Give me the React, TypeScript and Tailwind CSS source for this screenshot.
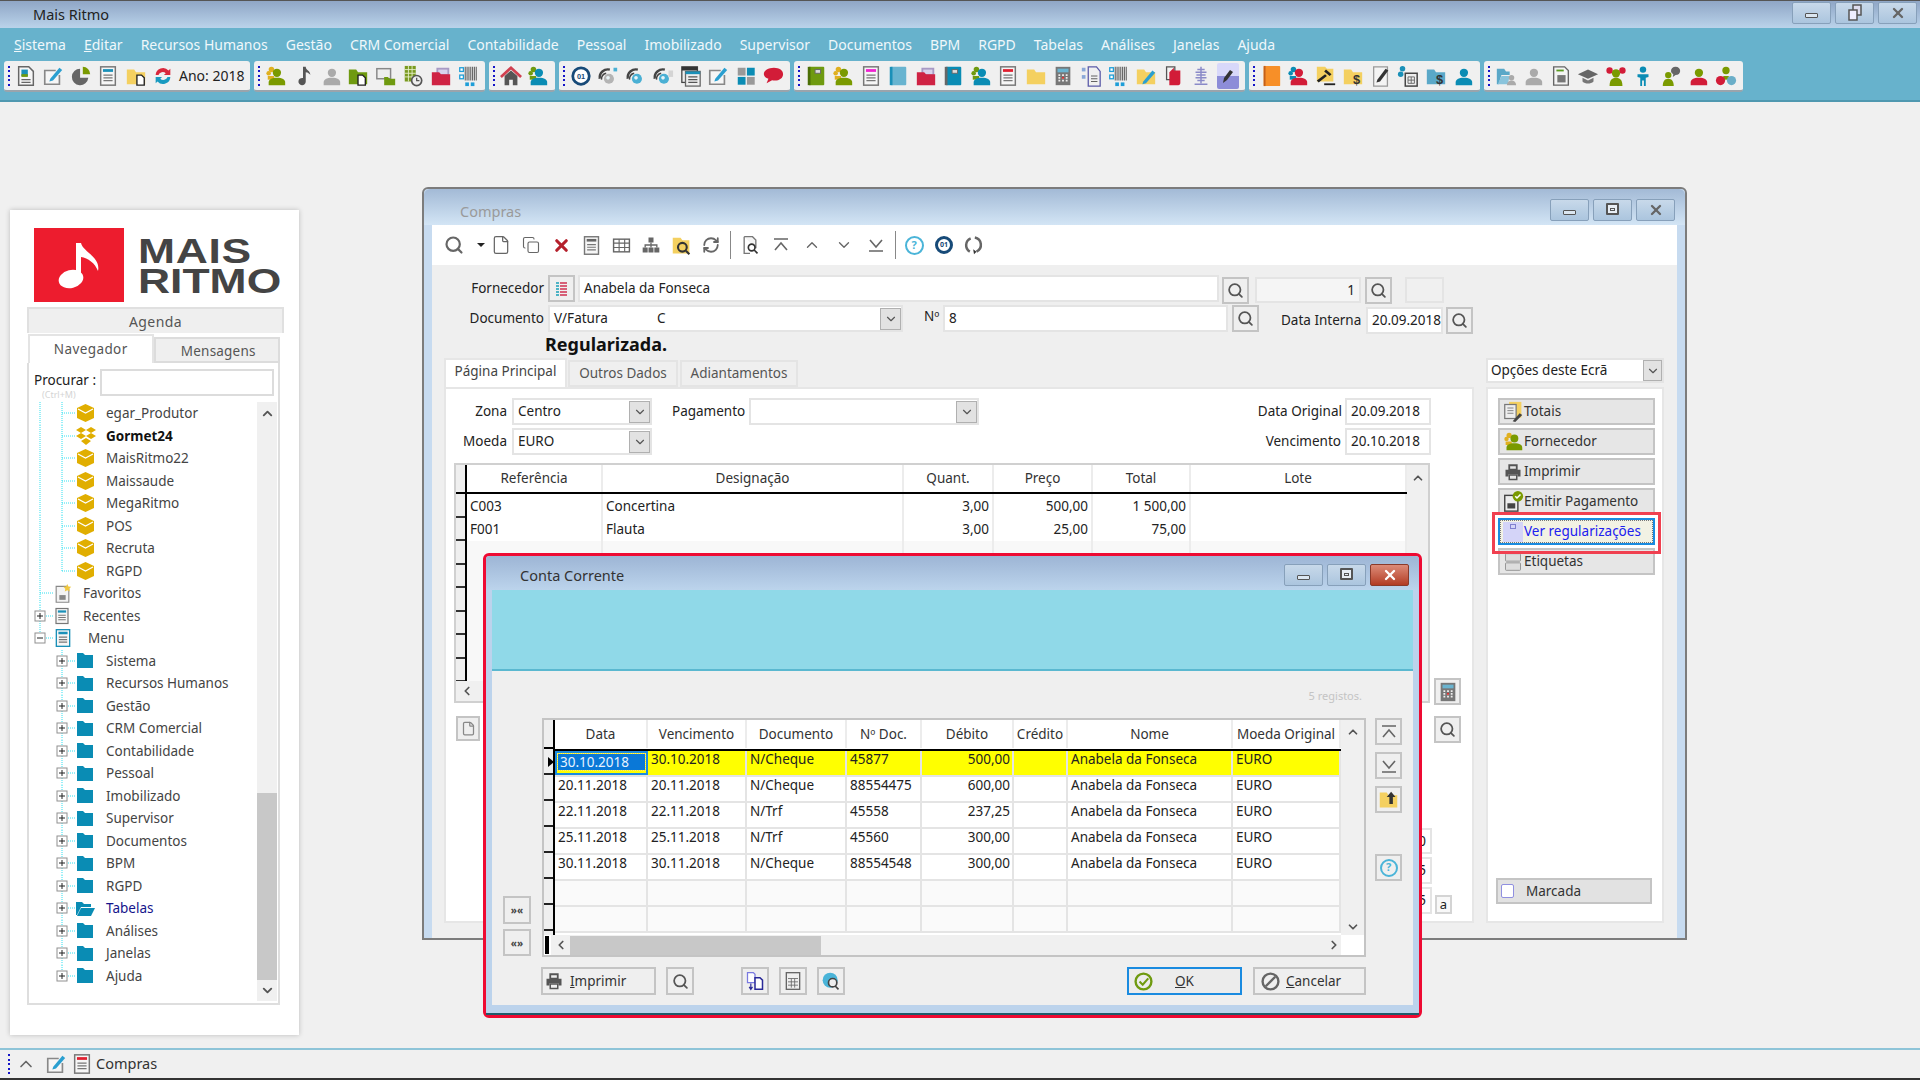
import { ReactNode } from "react";
import { ChevronDown, ChevronUp, ChevronLeft, ChevronRight, Search, File, Copy, X, RefreshCw } from "lucide-react";

type Kids = { children: ReactNode };

const Svg = ({ children, s = 22 }: Kids & { s?: number }) => (
  <svg width={s} height={s} viewBox="0 0 24 24" className="shrink-0">
    {children}
  </svg>
);

// toolbar glyphs
const Person = ({ body = "#7a9a00", head = "#7a9a00", back, s }: { body?: string; head?: string; back?: string; s?: number }) => (
  <Svg s={s}>
    {back && <circle cx="7" cy="5" r="3" fill={back} />}
    {back && <circle cx="4" cy="9" r="2.500" fill={back} />}
    {back && <path d="M3 12h7v4H3z" fill={back} />}
    <circle cx="13" cy="8.500" r="4.500" fill={head} />
    <path d="M4 22v-3c0-3 3-5 9-5s9 2 9 5v3z" fill={body} />
  </Svg>
);
const Doc = ({ band = "#888", stroke = "#777", s }: { band?: string; stroke?: string; s?: number }) => (
  <Svg s={s}>
    <rect x="4" y="2" width="16" height="20" fill="#f6f6f6" stroke={stroke} strokeWidth="1.6" />
    <rect x="6.500" y="4.500" width="11" height="3" fill={band} />
    <path d="M7 11h10M7 14h10M7 17h10" stroke="#777" strokeWidth="1.4" />
  </Svg>
);
const Folder = ({ fill = "#f4d060", mark, s }: { fill?: string; mark?: ReactNode; s?: number }) => (
  <Svg s={s}>
    <path d="M2 5h8l2 3h10v13H2z" fill={fill} />
    {mark}
  </Svg>
);
const Book = ({ fill = "#6f9a10", spine = "#4c6f06", label = true }: { fill?: string; spine?: string; label?: boolean }) => (
  <Svg>
    <rect x="4" y="2" width="17" height="20" rx="1" fill={fill} />
    <rect x="3" y="2" width="3" height="20" fill={spine} />
    {label && <rect x="11" y="5" width="6" height="4" fill="#ddd" stroke="#666" />}
  </Svg>
);
const RedFolder = () => (
  <Svg>
    <path d="M7 3h14v15H7z" fill="#a89ac4" />
    <path d="M9 5h10v5H9z" fill="#d8d2ec" />
    <path d="M2 8h8l2 2h10v12H2z" fill="#cf2344" />
  </Svg>
);
const Barcode = () => (
  <Svg>
    <path d="M9 2v15M11 2v15M13 2v15M15 2v15M17 2v15M19 2v15M21 2v15" stroke="#666" strokeWidth="1.2" />
    <rect x="3" y="3" width="4" height="4" fill="#fff" stroke="#1e9ed8" strokeWidth="1.4" />
    <rect x="3" y="11" width="4" height="4" fill="#fff" stroke="#1e9ed8" strokeWidth="1.4" />
    <rect x="9" y="19" width="4" height="4" fill="#1e9ed8" />
    <rect x="15" y="19" width="4" height="4" fill="#1e9ed8" />
  </Svg>
);
const Ring = ({ c = "#444", ball = "#4ab0d4", extra }: { c?: string; ball?: string; extra?: ReactNode }) => (
  <Svg>
    <path d="M3 15a9 9 0 0 1 11-10" fill="none" stroke={c} strokeWidth="2.600" />
    <path d="M5 16a6 6 0 0 1 5-7" fill="none" stroke={c} strokeWidth="1.600" />
    <circle cx="13" cy="15" r="5.500" fill={ball} />
    <circle cx="12" cy="14" r="2" fill="#e8f4f8" />
    {extra}
  </Svg>
);
const Pencil = ({ c = "#2a9fd0" }: { c?: string }) => (
  <Svg>
    <path d="M19 11v10H3V6h12" fill="#f6f6f6" stroke="#888" strokeWidth="1.800" />
    <path d="M9 15l10-12 3 2.500L12 17l-4 1z" fill={c} />
  </Svg>
);
const Calc = () => (
  <Svg>
    <rect x="4" y="2" width="16" height="20" fill="#777" />
    <rect x="6" y="4" width="12" height="4" fill="#6ab4d0" />
    <path d="M7 11h2M11 11h2M15 11h2M7 14h2M11 14h2M15 14h2M7 17h2M11 17h2M15 17h2" stroke="#eee" strokeWidth="1.800" />
    <rect x="11" y="13" width="2" height="2" fill="#d22" />
  </Svg>
);
const Dollar = ({ fill }: { fill: string }) => (
  <Folder
    fill={fill}
    mark={
      <text x="16" y="21" fontSize="14" fontWeight="700" fill="#333" textAnchor="middle" fontFamily="Liberation Sans">
        $
      </text>
    }
  />
);

const toolbars: { width: string; items: ReactNode[]; tail?: string }[] = [
  {
    width: "w-[246px]",
    tail: "Ano: 2018",
    items: [
      <Svg>
        <path d="M4 2h11l5 5v15H4z" fill="#f6f6f6" stroke="#666" strokeWidth="1.600" />
        <rect x="7" y="5" width="7" height="7" fill="#1a90b8" />
        <rect x="7" y="10" width="7" height="3" fill="#6f9a10" />
        <path d="M7 16h10M7 19h10" stroke="#666" strokeWidth="1.400" />
      </Svg>,
      <Pencil />,
      <Svg>
        <path d="M11 4a9 9 0 1 0 9 10h-9z" fill="#666" />
        <path d="M14 2a8 8 0 0 1 8 8h-8z" fill="#7a9a00" />
      </Svg>,
      <Doc band="#1a90b8" />,
      <Folder mark={<path d="M13 11h5l3 3v8h-8z" fill="#fff" stroke="#222" strokeWidth="1.500" />} />,
      <Svg>
        <path d="M4 11a8 8 0 0 1 14-5l2-2v7h-7l2-2a5 5 0 0 0-8 2z" fill="#d9283c" />
        <path d="M20 13a8 8 0 0 1-14 5l-2 2v-7h7l-2 2a5 5 0 0 0 8-2z" fill="#189ac0" />
      </Svg>,
    ],
  },
  {
    width: "w-[231px]",
    items: [
      <Person back="#e0b020" />,
      <Svg>
        <path d="M12 2h3c0 4 5 4 5 9-2-3-5-3-5-3v10a4 4 0 1 1-3-3.800z" fill="#555" />
      </Svg>,
      <Person body="#aaa" head="#aaa" />,
      <Folder fill="#6f9a10" mark={<path d="M12 11h5l3 3v8h-8z" fill="#fff" stroke="#222" strokeWidth="1.500" />} />,
      <Svg>
        <rect x="2" y="4" width="15" height="11" fill="#eee" stroke="#888" strokeWidth="1.600" />
        <path d="M10 13h4l2 2h6v7H10z" fill="#6f9a10" />
      </Svg>,
      <Svg>
        <rect x="3" y="1" width="12" height="17" fill="#7a9a20" />
        <path d="M3 5h12M3 9h12M3 13h12M7 1v17M11 1v17" stroke="#e6efc8" />
        <circle cx="16" cy="17" r="5.500" fill="#eee" stroke="#555" strokeWidth="1.800" />
        <path d="M16 14v3h3" fill="none" stroke="#555" strokeWidth="1.400" />
      </Svg>,
      <RedFolder />,
      <Barcode />,
    ],
  },
  {
    width: "w-[66px]",
    items: [
      <Svg>
        <path d="M1 13 12 3l11 10" fill="none" stroke="#d04050" strokeWidth="3" />
        <path d="M5 12l7-6 7 6v10h-5v-6h-4v6H5z" fill="#555" />
      </Svg>,
      <Person body="#0a8cb4" head="#0a8cb4" back="#6f9a10" />,
    ],
  },
  {
    width: "w-[231px]",
    items: [
      <Svg>
        <circle cx="12" cy="12" r="9" fill="#fff" stroke="#174a78" strokeWidth="3" />
        <text x="12" y="15" fontSize="8" fontWeight="700" fill="#174a78" textAnchor="middle" fontFamily="Liberation Sans">
          01
        </text>
      </Svg>,
      <Ring ball="#b4b4b4" extra={<rect x="18" y="3" width="4" height="4" fill="#4ab0d4" />} />,
      <Ring />,
      <Ring extra={<rect x="18" y="6" width="5" height="7" fill="#d4d4d4" />} />,
      <Svg>
        <rect x="2" y="2" width="17" height="17" fill="#eee" stroke="#444" strokeWidth="1.400" />
        <rect x="2" y="2" width="17" height="4" fill="#333" />
        <rect x="6" y="7" width="16" height="16" fill="#eee" stroke="#666" strokeWidth="1.400" />
        <rect x="6" y="7" width="16" height="3" fill="#1a90b8" />
        <path d="M9 13h10M9 16h10M9 19h10" stroke="#555" strokeWidth="1.400" />
      </Svg>,
      <Pencil />,
      <Svg>
        <rect x="3" y="3" width="8.500" height="8.500" fill="#999" />
        <rect x="13" y="3" width="8.500" height="8.500" fill="#0a8cb4" />
        <rect x="3" y="13" width="8.500" height="8.500" fill="#0a8cb4" />
        <rect x="13" y="13" width="8.500" height="8.500" fill="#999" />
      </Svg>,
      <Svg>
        <path d="M13 3c6 0 10 3 10 7s-4 7-9 7c-1 0-2 0-3-.500L5 20l2-5c-3-1-5-3-5-5 0-4 5-7 11-7z" fill="#d21c38" />
      </Svg>,
    ],
  },
  {
    width: "w-[451px]",
    items: [
      <Book />,
      <Person back="#e0b020" />,
      <Doc band="#f020d0" />,
      <Book fill="#68b4d0" spine="#1a90b8" label={false} />,
      <RedFolder />,
      <Book fill="#0a8cb4" spine="#666" />,
      <Person body="#0a8cb4" head="#0a8cb4" back="#6f9a10" />,
      <Doc band="#e02030" />,
      <Folder />,
      <Calc />,
      <Svg>
        <rect x="2" y="3" width="4" height="4" fill="#8aa8d8" />
        <rect x="2" y="11" width="4" height="4" fill="#8aa8d8" />
        <path d="M9 2h9l4 5v16H9z" fill="#f0f0f0" stroke="#5a5aa8" strokeWidth="1.400" />
        <path d="M12 12h7M12 15h7M12 18h7" stroke="#555" />
      </Svg>,
      <Barcode />,
      <Folder mark={<path d="M9 18l10-12 3 2.500L12 20l-4 1z" fill="#2a9fd0" />} />,
      <Svg>
        <path d="M5 2h9v14H5z" fill="#f4f4f4" stroke="#555" strokeWidth="1.400" />
        <path d="M13 6h7v14a2 2 0 0 1-2 2H8V8l5-5z" fill="#d21c38" />
      </Svg>,
      <Svg>
        <path d="M12 2v18M8 5h8M6 8h12M7 11h10M6 14h12M8 17h8M5 21h14" stroke="#8a8ac8" strokeWidth="1.600" />
      </Svg>,
      <span className="flex h-[26px] w-[22px] items-center justify-center rounded-[2px] bg-linear-to-b from-[#d8d8fa] from-50% to-[#8d8dd8] to-50%">
        <svg width="14" height="18" viewBox="0 0 14 18">
          <path d="M2 16l1-5 6-8 3 2-6 8z" fill="#333" />
        </svg>
      </span>,
    ],
  },
  {
    width: "w-[231px]",
    items: [
      <Svg>
        <rect x="4" y="1" width="18" height="22" rx="1" fill="#f78f28" />
        <rect x="4" y="1" width="2" height="22" fill="#c4601a" />
      </Svg>,
      <Person body="#d21c38" head="#d21c38" back="#0a8cb4" />,
      <Svg>
        <path d="M2 2h9l2 2h7v14H2z" fill="#f4d060" />
        <path d="M12 5l6 5-2 2-6-5zM11 10l2 2-9 7-2-2z" fill="#222" />
        <path d="M10 20h12v2H10z" fill="#222" />
      </Svg>,
      <Dollar fill="#f4d060" />,
      <Svg>
        <path d="M4 2h15v21H4z" fill="#f4f4f4" stroke="#999" strokeWidth="1.400" />
        <path d="M8 16l9-12 3 2-9 12-4 1z" fill="#333" />
      </Svg>,
      <Svg>
        <circle cx="6" cy="4" r="3" fill="#1a90b8" />
        <circle cx="4" cy="10" r="3" fill="#1a90b8" />
        <rect x="9" y="9" width="13" height="14" fill="#eee" stroke="#444" strokeWidth="1.600" />
        <path d="M12 13h7v7h-7zM15.500 13v7M12 16.500h7" stroke="#666" fill="none" />
      </Svg>,
      <Dollar fill="#5aa8c8" />,
      <Person body="#0a8cb4" head="#0a8cb4" />,
    ],
  },
  {
    width: "w-[259px]",
    items: [
      <Svg>
        <path d="M2 4h8l2 3h4v4H7L4 21H2z" fill="#5aa8c8" />
        <path d="M7 12h9l-2 9H3z" fill="#8ac4dc" />
        <circle cx="18" cy="14" r="3" fill="#aaa" />
        <path d="M13 22c0-3 2-5 5-5s5 2 5 5z" fill="#aaa" />
      </Svg>,
      <Person body="#aaa" head="#aaa" />,
      <Svg>
        <path d="M4 2h12l4 4v16H4z" fill="#f4f4f4" stroke="#666" strokeWidth="1.500" />
        <rect x="8" y="11" width="9" height="8" fill="#777" />
        <path d="M7 6h8" stroke="#5a9a20" strokeWidth="2" />
      </Svg>,
      <Svg>
        <path d="M12 5 23 10l-11 5L1 10z" fill="#666" />
        <path d="M6 14v4c3 3 9 3 12 0v-4l-6 3z" fill="#777" />
      </Svg>,
      <Svg>
        <circle cx="5" cy="6" r="3.500" fill="#d21c38" />
        <circle cx="19" cy="6" r="3.500" fill="#d21c38" />
        <circle cx="12" cy="9" r="4.500" fill="#7a9a00" />
        <path d="M5 23c0-7 3-9 7-9s7 2 7 9z" fill="#7a9a00" />
      </Svg>,
      <Svg>
        <circle cx="12" cy="5" r="3.500" fill="#0a8cb4" />
        <path d="M6 10h12v3l-3 1v9h-2v-6h-2v6H9v-9l-3-1z" fill="#0a8cb4" />
      </Svg>,
      <Svg>
        <circle cx="9" cy="11" r="3.500" fill="#7a9a00" />
        <path d="M3 23c0-5 2-8 6-8s6 3 6 8z" fill="#7a9a00" />
        <path d="M17 2c3 0 5 2 5 4.500S20 11 17 11l-3 2 .5-3c-1.500-1-2.500-2-2.500-3.500C12 4 14 2 17 2z" fill="#666" />
      </Svg>,
      <Person body="#d21c38" head="#7a9a00" />,
      <Svg>
        <circle cx="12" cy="6" r="4" fill="#7a9a00" />
        <path d="M9 12h6v4H9z" fill="#7a9a00" />
        <circle cx="6" cy="17" r="5" fill="#d21c38" />
        <circle cx="18" cy="17" r="5" fill="#6aaec8" />
      </Svg>,
    ],
  },
];

const menu = [
  { t: "Sistema", u: true },
  { t: "Editar", u: true },
  { t: "Recursos Humanos" },
  { t: "Gestão" },
  { t: "CRM Comercial" },
  { t: "Contabilidade" },
  { t: "Pessoal" },
  { t: "Imobilizado" },
  { t: "Supervisor" },
  { t: "Documentos" },
  { t: "BPM" },
  { t: "RGPD" },
  { t: "Tabelas" },
  { t: "Análises" },
  { t: "Janelas", u: true },
  { t: "Ajuda" },
];

const Grip = () => (
  <span className="flex h-[20px] w-[2px] flex-col justify-between">
    <i className="h-[2px] bg-[#1414c8]" />
    <i className="h-[2px] bg-[#1414c8]" />
    <i className="h-[2px] bg-[#1414c8]" />
    <i className="h-[2px] bg-[#1414c8]" />
    <i className="h-[2px] bg-[#1414c8]" />
  </span>
);

type Kind = "min" | "max" | "restore" | "close";

const WinGlyph = ({ kind, dark }: { kind: Kind; dark?: boolean }) => {
  if (kind === "min") return <i className="mt-[5px] h-[5px] w-[13px] rounded-[1px] border border-[#555] bg-[#dbe6f0]" />;
  if (kind === "max")
    return (
      <i className="mb-[2px] flex h-[12px] w-[13px] items-center justify-center rounded-[1px] border-2 border-[#555] bg-[#e8eef5]">
        <b className="h-[3px] w-[5px] border border-[#555]" />
      </i>
    );
  if (kind === "restore")
    return (
      <svg width="16" height="18" viewBox="0 0 16 18">
        <rect x="6" y="1" width="8" height="10" fill="#dde" stroke="#555" strokeWidth="1.500" />
        <rect x="2" y="6" width="8" height="10" fill="#eef" stroke="#555" strokeWidth="1.500" />
      </svg>
    );
  return <X size={16} strokeWidth={3.5} className={dark ? "text-white" : "text-[#666]"} />;
};

const WinBtn = ({ kind, red }: { kind: Kind; red?: boolean }) => (
  <span
    className={
      red
        ? "flex h-[22px] w-[39px] items-center justify-center rounded-[2px] border border-[#8a3a2a] bg-linear-to-b from-[#dc8b78] to-[#b23a22]"
        : "flex h-[22px] w-[39px] items-center justify-center rounded-[2px] border border-[#87a0ba] bg-linear-to-b from-[#c8d9ea] to-[#abc5de]"
    }
  >
    <WinGlyph kind={kind} dark={red} />
  </span>
);

const Field = ({ w, children, right }: { w: string; children?: ReactNode; right?: boolean }) => (
  <div className={`flex h-[27px] items-center border-2 border-[#e4e4e4] bg-white px-[4px] text-[13.5px] text-[#222] ${w} ${right ? "justify-end" : ""}`}>
    {children}
  </div>
);

const Combo = ({ w, children }: { w: string; children?: ReactNode }) => (
  <div className={`flex h-[27px] items-center justify-between border-2 border-[#e4e4e4] bg-white pl-[4px] text-[13.5px] text-[#222] ${w}`}>
    <span className="flex">{children}</span>
    <span className="flex h-[22px] w-[21px] items-center justify-center border border-[#b0b0b0] bg-[#e2e2e2]">
      <ChevronDown size={14} className="text-[#555]" />
    </span>
  </div>
);

const BoxBtn = ({ w = "w-[27px]", h = "h-[27px]", children, className = "" }: { w?: string; h?: string; children?: ReactNode; className?: string }) => (
  <span className={`flex shrink-0 items-center justify-center border-2 border-[#c4c4c4] bg-[#efefef] ${w} ${h} ${className}`}>{children}</span>
);

const SearchBtn = () => (
  <BoxBtn>
    <Search size={17} strokeWidth={2.5} className="text-[#555]" />
  </BoxBtn>
);

// tree
const Cube = () => (
  <svg width="17" height="18" viewBox="0 0 17 18" className="shrink-0">
    <path d="M8.500 0 17 4v10l-8.500 4L0 14V4z" fill="#e0ae00" />
    <path d="M1 5l7.500 4L16 5" fill="none" stroke="#fff" strokeWidth="1.200" />
  </svg>
);
const BoxOpen = () => (
  <svg width="20" height="18" viewBox="0 0 20 18" className="shrink-0">
    <path d="M5 0l5 3-5 3-5-3zM15 0l5 3-5 3-5-3zM5 6l5 3-5 3-5-3zM15 6l5 3-5 3-5-3zM10 11l5 3-5 4-5-4z" fill="#e0ae00" />
  </svg>
);
const TreeFolder = ({ open }: { open?: boolean }) => (
  <svg width="19" height="15" viewBox="0 0 19 15" className="shrink-0">
    {open ? <path d="M0 1h6l2 2h7v3H5L1 14H0zM5 7h14l-4 8H1z" fill="#0a8cb4" /> : <path d="M1 0h6l2 2h8v13H1z" fill="#0a8cb4" />}
  </svg>
);
const Favorite = () => (
  <Svg s={19}>
    <path d="M4 3h13l3 3v17H4z" fill="#f4f4f4" stroke="#888" strokeWidth="1.400" />
    <rect x="8" y="14" width="8" height="6" fill="#888" />
    <path d="M18 0l1.500 3 3.500.500-2.500 2.500.6 3.500-3.100-1.700-3.100 1.700.6-3.500L13 3.500l3.500-.500z" fill="#f0c840" />
  </Svg>
);

const Guide = ({ level, first, stop, sign }: { level: 1 | 2; first?: boolean; stop?: boolean; sign?: "+" | "-" }) => {
  const x = level === 2 ? 33 : 11;
  const width = level === 2 ? 46 : 24;
  return (
    <svg width={width} height="22.500" viewBox={`0 0 ${width} 22.5`} className="shrink-0">
      {level === 2 && first && <path d="M11 0v22.500" stroke="#30e0f0" strokeDasharray="1 1" />}
      <path d={`M${x} 0V${stop ? 11 : 22.5}M${x} 11H${width}`} stroke="#30e0f0" strokeDasharray="1 1" fill="none" />
      {sign && (
        <g>
          <rect x={x - 5} y="6" width="10" height="10" fill="#fff" stroke="#909090" strokeWidth="1" />
          <path d={sign === "+" ? `M${x - 3} 11h6M${x} 8v6` : `M${x - 3} 11h6`} stroke="#222" />
        </g>
      )}
    </svg>
  );
};

const projects = ["egar_Produtor", "Gormet24", "MaisRitmo22", "Maissaude", "MegaRitmo", "POS", "Recruta", "RGPD"];
const modules = ["Sistema", "Recursos Humanos", "Gestão", "CRM Comercial", "Contabilidade", "Pessoal", "Imobilizado", "Supervisor", "Documentos", "BPM", "RGPD", "Tabelas", "Análises", "Janelas", "Ajuda"];

const TreeRow = ({ children }: Kids) => <div className="flex h-[22.5px] items-center text-[13.5px] text-[#444]">{children}</div>;

const Sidebar = () => (
  <div className="absolute top-[210px] left-[10px] flex h-[825px] w-[289px] flex-col bg-white pt-[18px] pl-[17px] shadow-[0_0_5px_rgba(0,0,0,0.22)]">
    <div className="ml-[7px] flex h-[79px] items-start gap-[14px]">
      <svg width="90" height="74" viewBox="0 0 90 74" className="bg-[#ed1c2e]">
        <ellipse cx="37" cy="51" rx="12.500" ry="9" fill="#fff" transform="rotate(-14 37 51)" />
        <path d="M42 15h5c2 9 20 14 17 28-3-8-10-13-17-14v22h-5z" fill="#fff" />
      </svg>
      <div className="mt-[8px] flex origin-left scale-x-[1.27] flex-col text-[35px] leading-[30px] font-bold text-[#444] font-['Liberation_Sans',sans-serif]">
        <span className="tracking-[0.5px]">MAIS</span>
        <span>RITMO</span>
      </div>
    </div>
    <div className="flex h-[26px] w-[257px] items-center justify-center border-2 border-b-0 border-[#e0e0e0] bg-[#efefef] text-[14px] tracking-[0.4px] text-[#555]">Agenda</div>
    <div className="flex h-[30px] w-[253px] items-end pl-px">
      <div className="flex h-[29px] w-[126px] items-center justify-center border-x-2 border-t-2 border-[#e4e4e4] bg-white text-[13.5px] tracking-[0.4px] text-[#555]">Navegador</div>
      <div className="flex h-[26px] w-[127px] items-center justify-center border-2 border-[#dcdcdc] bg-[#efefef] pt-[2px] pl-[3px] text-[13.5px] tracking-[0.2px] text-[#555]">Mensagens</div>
    </div>
    <div className="flex h-[642px] w-[253px] flex-col border-2 border-t-0 border-[#dedede] pt-[6px]">
      <div className="flex h-[33px]">
        <div className="flex w-[71px] flex-col pt-[2px] pl-[5px] text-[13.5px] leading-[18px] text-[#222]">
          <span>Procurar :</span>
          <span className="pl-[8px] text-[9px] leading-[12px] text-[#d4d4d4]">(Ctrl+M)</span>
        </div>
        <div className="h-[27px] w-[174px] border-2 border-[#dcdcdc]" />
      </div>
      <div className="flex flex-1">
        <div className="flex-1">
          {projects.map((p, i) => (
            <TreeRow key={p}>
              <Guide level={2} first stop={i === projects.length - 1} />
              <span className="flex w-[21px] justify-center">{i === 1 ? <BoxOpen /> : <Cube />}</span>
              <span className={i === 1 ? "ml-[10px] font-bold text-[#111]" : "ml-[10px]"}>{p}</span>
            </TreeRow>
          ))}
          <TreeRow>
            <Guide level={1} />
            <Favorite />
            <span className="ml-[11px]">Favoritos</span>
          </TreeRow>
          <TreeRow>
            <Guide level={1} sign="+" />
            <Doc band="#1a90b8" s={18} />
            <span className="ml-[12px]">Recentes</span>
          </TreeRow>
          <TreeRow>
            <Guide level={1} stop sign="-" />
            <Doc band="#1a90b8" stroke="#1a90b8" s={20} />
            <span className="ml-[15px]">Menu</span>
          </TreeRow>
          {modules.map((m, i) => (
            <TreeRow key={m + i}>
              <Guide level={2} sign="+" stop={i === modules.length - 1} />
              <span className="flex w-[21px] justify-center">
                <TreeFolder open={m === "Tabelas"} />
              </span>
              <span className={m === "Tabelas" ? "ml-[10px] text-[#14148c]" : "ml-[10px]"}>{m}</span>
            </TreeRow>
          ))}
        </div>
        <div className="mr-px flex h-[599px] w-[20px] flex-col items-center bg-[#f0f0f0]">
          <ChevronUp size={15} strokeWidth={3} className="mt-[4px] text-[#555]" />
          <span className="mt-[372px] h-[187px] w-full bg-[#c8c8c8]" />
          <ChevronDown size={15} strokeWidth={3} className="mt-[3px] text-[#555]" />
        </div>
      </div>
    </div>
  </div>
);

function ArrowBar({ up }: { up?: boolean }) {
  return (
    <svg width="18" height="16" viewBox="0 0 18 16">
      {up ? <path d="M2 2h14M3 13l6-7 6 7" fill="none" stroke="#666" strokeWidth="1.600" /> : <path d="M2 14h14M3 3l6 7 6-7" fill="none" stroke="#666" strokeWidth="1.600" />}
    </svg>
  );
}

const formTools: ReactNode[] = [
  <Search size={20} strokeWidth={2.6} className="text-[#666]" />,
  <span className="h-0 w-0 border-x-[4px] border-t-[4px] border-x-transparent border-t-[#222]" />,
  <File size={20} strokeWidth={1.5} className="text-[#666]" />,
  <Copy size={18} strokeWidth={1.5} className="text-[#666]" />,
  <X size={19} strokeWidth={4} className="text-[#b5202c]" />,
  <Doc band="#666" s={21} />,
  <Svg s={19}>
    <rect x="2" y="4" width="20" height="16" fill="none" stroke="#666" strokeWidth="1.800" />
    <path d="M2 9h20M2 14.500h20M9 4v16M16 4v16" stroke="#666" strokeWidth="1.400" />
  </Svg>,
  <Svg s={20}>
    <rect x="9" y="3" width="6" height="6" fill="#666" />
    <rect x="2" y="15" width="6" height="6" fill="#666" />
    <rect x="9" y="15" width="6" height="6" fill="#666" />
    <rect x="16" y="15" width="6" height="6" fill="#666" />
    <path d="M12 9v6M5 15v-3h14v3" stroke="#666" strokeWidth="1.600" fill="none" />
  </Svg>,
  <Svg s={21}>
    <path d="M2 3h9l2 3h8v15H2z" fill="#f4d060" />
    <circle cx="13" cy="14" r="5" fill="none" stroke="#333" strokeWidth="2.400" />
    <path d="M17 18l4 4" stroke="#333" strokeWidth="2.400" />
  </Svg>,
  <RefreshCw size={18} strokeWidth={2.4} className="text-[#666]" />,
];

const formToolsB: ReactNode[] = [
  <Svg s={20}>
    <path d="M5 2h10l4 4v10" fill="#f4f4f4" stroke="#777" strokeWidth="1.600" />
    <path d="M5 2v20h7" fill="none" stroke="#777" strokeWidth="1.600" />
    <circle cx="14" cy="15" r="4" fill="none" stroke="#333" strokeWidth="2" />
    <path d="M17 18l4 4" stroke="#333" strokeWidth="2" />
  </Svg>,
  <ArrowBar up />,
  <ChevronUp size={18} strokeWidth={1.8} className="text-[#666]" />,
  <ChevronDown size={18} strokeWidth={1.8} className="text-[#666]" />,
  <ArrowBar />,
];

const FormToolbar = () => (
  <div className="flex h-[40px] shrink-0 items-center bg-white">
    <span className="flex">
      <span className="flex w-[44px] items-center justify-center">{formTools[0]}</span>
      <span className="flex w-[10px] items-center justify-center">{formTools[1]}</span>
      {formTools.slice(2).map((t, i) => (
        <span key={i} className="flex w-[30px] items-center justify-center">
          {t}
        </span>
      ))}
    </span>
    <i className="mr-[3px] ml-[4px] h-[28px] w-px bg-[#888]" />
    <span className="flex">
      {formToolsB.map((t, i) => (
        <span key={i} className={i === 1 ? "flex w-[30px] items-center justify-center" : "flex w-[32px] items-center justify-center"}>
          {t}
        </span>
      ))}
    </span>
    <i className="mr-[3px] ml-[3px] h-[28px] w-px bg-[#888]" />
    <span className="flex w-[30px] items-center justify-center">
      <span className="flex h-[19px] w-[19px] items-center justify-center rounded-full border-2 border-[#4ab4d8] text-[11px] font-bold text-[#4ab4d8]">?</span>
    </span>
    <span className="flex w-[30px] items-center justify-center">
      <span className="flex h-[18px] w-[18px] items-center justify-center rounded-full border-[3px] border-[#174a78] text-[7px] font-bold text-[#174a78]">01</span>
    </span>
    <span className="flex w-[30px] items-center justify-center">
      <Svg s={20}>
        <path d="M8 4a9 9 0 0 0-1 16M13 3a9 9 0 0 1 2 17" fill="none" stroke="#666" strokeWidth="3" />
        <path d="M11 17l4 3-3 3z" fill="#333" />
      </Svg>
    </span>
  </div>
);

const mainCols = "grid-cols-[136px_301px_90px_99px_98px_216px]";
const mainRows = [
  ["C003", "Concertina", "3,00", "500,00", "1 500,00", ""],
  ["F001", "Flauta", "3,00", "25,00", "75,00", ""],
];
const mainEmpty = [0, 1, 2, 3, 4, 5, 6];

const MainTable = () => (
  <div className="flex h-[240px] w-[976px] flex-col border-2 border-[#d0d0d0] bg-white text-[13.5px] text-[#222]">
    <div className="flex flex-1 overflow-hidden">
      <div className="w-[11px] shrink-0 border-r-2 border-black bg-[#efefef]">
        <div className="h-[29px] border-b-2 border-black" />
        {[0, 1, ...mainEmpty].map((r) => (
          <div key={r} className="h-[23.500px] border-b-2 border-[#333]" />
        ))}
      </div>
      <div className="w-[940px]">
        <div className={`grid h-[29px] border-b-2 border-black text-[#333] ${mainCols}`}>
          {["Referência", "Designação", "Quant.", "Preço", "Total", "Lote"].map((h) => (
            <span key={h} className="flex items-center justify-center border-r-2 border-[#ececec]">
              {h}
            </span>
          ))}
        </div>
        {mainRows.map((r) => (
          <div key={r[0]} className={`grid h-[23.500px] ${mainCols}`}>
            {r.map((c, i) => (
              <span key={i} className={i >= 2 && i < 5 ? "flex items-center justify-end border-r-2 border-[#ececec] pr-[3px]" : "flex items-center border-r-2 border-[#ececec] pl-[3px]"}>
                {c}
              </span>
            ))}
          </div>
        ))}
        {mainEmpty.map((r) => (
          <div key={r} className={`grid h-[23.500px] bg-[#f8f8f8] ${mainCols}`}>
            {[0, 1, 2, 3, 4, 5].map((c) => (
              <span key={c} className="border-r-2 border-[#ececec]" />
            ))}
          </div>
        ))}
      </div>
      <div className="flex flex-1 justify-center bg-[#f0f0f0] pt-[6px]">
        <ChevronUp size={14} strokeWidth={3} className="text-[#555]" />
      </div>
    </div>
    <div className="flex h-[20px] shrink-0 items-center bg-[#f0f0f0] pl-[4px]">
      <ChevronLeft size={14} strokeWidth={3} className="text-[#555]" />
    </div>
  </div>
);

function PrinterIcon() {
  return (
    <Svg s={18}>
      <path d="M7 3h10v6H7z" fill="none" stroke="#555" strokeWidth="2.400" />
      <path d="M2 9h20v9h-4v-3H6v3H2z" fill="#555" />
      <path d="M7 16h10v6H7z" fill="none" stroke="#555" strokeWidth="2" />
    </Svg>
  );
}

const rightBtns = [
  {
    t: "Totais",
    i: (
      <Svg s={21}>
        <rect x="7" y="1" width="14" height="18" fill="#f4d060" />
        <rect x="2" y="4" width="13" height="16" fill="#eee" stroke="#777" strokeWidth="1.400" />
        <path d="M5 8h7M5 11h7M5 14h7" stroke="#777" />
        <path d="M11 23l8-9 3 2-8 8z" fill="#444" />
      </Svg>
    ),
  },
  { t: "Fornecedor", i: <Person back="#e0b020" s={21} /> },
  { t: "Imprimir", i: <PrinterIcon /> },
  {
    t: "Emitir Pagamento",
    i: (
      <Svg s={21}>
        <rect x="2" y="5" width="15" height="18" fill="#eee" stroke="#444" strokeWidth="1.600" />
        <path d="M5 14h9v6H5z" fill="#444" />
        <circle cx="17" cy="6" r="6" fill="#7a9a00" />
        <path d="M14 6l2 2 4-4" fill="none" stroke="#fff" strokeWidth="1.800" />
      </Svg>
    ),
  },
];

const RightPanel = () => (
  <div className="flex w-[178px] flex-col">
    <div className="mb-[4px] flex h-[25px] items-center justify-between border-2 border-[#e4e4e4] bg-white pl-[3px] text-[13.5px] text-[#222]">
      <span>Opções deste Ecrã</span>
      <span className="flex h-[21px] w-[19px] items-center justify-center border border-[#b0b0b0] bg-[#e2e2e2]">
        <ChevronDown size={14} className="text-[#555]" />
      </span>
    </div>
    <div className="flex h-[536px] flex-col border-2 border-[#e6e6e6] bg-white pt-[9px] pl-[10px]">
      <div className="flex flex-col gap-[3px]">
        {rightBtns.map((b) => (
          <div key={b.t} className="flex h-[27px] w-[157px] items-center gap-px border-2 border-[#c4c4c4] bg-[#e6e6e6] pl-[3px] text-[13.5px] whitespace-nowrap text-[#333]">
            <span className="flex w-[20px] justify-center">{b.i}</span>
            {b.t}
          </div>
        ))}
        <div className="relative h-[27px] w-[157px]">
          <div className="flex h-full items-center border-2 border-[#1a8be0] bg-[#f2f2e4] pl-[3px] text-[13.5px] text-[#2020f0] outline-1 -outline-offset-3 outline-[#777] outline-dotted">
            <span className="mr-px flex h-[20px] w-[20px] justify-center bg-[#d4d4f8]">
              <i className="mt-[2px] h-[5px] w-[6px] border border-[#8080d0]" />
            </span>
            Ver regularizações
          </div>
          <div className="absolute -inset-x-[6px] -top-[6px] -bottom-[9px] border-[3px] border-[#f04050]" />
        </div>
        <div className="flex h-[27px] w-[157px] items-center gap-px border-2 border-[#c4c4c4] bg-[#e6e6e6] pl-[3px] text-[13.5px] text-[#333]">
          <span className="flex w-[20px] justify-center">
            <Svg s={20}>
              <rect x="3" y="2" width="18" height="9" rx="1" fill="#ddd" stroke="#888" />
              <rect x="3" y="13" width="18" height="9" rx="1" fill="#ddd" stroke="#888" />
            </Svg>
          </span>
          Etiquetas
        </div>
      </div>
      <div className="mt-auto mb-[17px] -ml-[2px] flex h-[26px] w-[156px] items-center border-2 border-[#c4c4c4] bg-[#e2e2e2] pl-[3px] text-[13.5px] text-[#333]">
        <i className="mr-[12px] h-[14px] w-[13px] rounded-[2px] border border-[#9090e0] bg-white" />
        Marcada
      </div>
    </div>
  </div>
);

const ComprasWindow = () => (
  <div className="absolute top-[187px] left-[422px] flex h-[753px] w-[1265px] flex-col rounded-t-md border-2 border-[#7c7c7c] bg-[#c7dbf0]">
    <div className="flex h-[36px] shrink-0 items-center justify-between rounded-t-md bg-linear-to-b from-[#a3bad6] to-[#d3e5f5] pr-[10px] pl-[36px]">
      <span className="mt-[9px] text-[14.5px] text-[#9a9a9a]">Compras</span>
      <span className="mt-[6px] flex gap-[4px]">
        <WinBtn kind="min" />
        <WinBtn kind="max" />
        <WinBtn kind="close" />
      </span>
    </div>
    <div className="mx-[8px] flex flex-1 flex-col bg-[#efefef]">
      <FormToolbar />
      <div className="mt-[10px] flex items-start text-[13.5px] text-[#222]">
        <span className="flex h-[27px] w-[112px] items-center justify-end">Fornecedor</span>
        <BoxBtn className="ml-[4px]">
          <svg width="13" height="16" viewBox="0 0 13 16">
            <path d="M1 2h3M1 5h3M1 8h3M1 11h3M1 14h3" stroke="#1aa0b8" strokeWidth="1.600" />
            <path d="M5 2h7M5 5h7M5 8h7M5 11h7M5 14h7" stroke="#d03050" strokeWidth="1.600" />
          </svg>
        </BoxBtn>
        <Field w="w-[641px] ml-[3px]">Anabela da Fonseca</Field>
        <span className="mt-[2px] ml-[3px]">
          <SearchBtn />
        </span>
        <span className="mt-[2px] ml-[6px] flex h-[26px] w-[106px] items-center justify-end border-2 border-[#e4e4e4] bg-[#f5f5f5] pr-[4px]">1</span>
        <span className="mt-[2px] ml-[4px]">
          <SearchBtn />
        </span>
        <span className="mt-[2px] ml-[13px] h-[26px] w-[39px] border-2 border-[#e4e4e4] bg-[#f0f0f0]" />
      </div>
      <div className="mt-px flex items-start text-[13.5px] text-[#222]">
        <span className="flex h-[27px] w-[112px] items-center justify-end">Documento</span>
        <Combo w="w-[355px] ml-[4px]">
          <span className="w-[103px]">V/Fatura</span>
          <span>C</span>
        </Combo>
        <span className="ml-[21px] w-[19px] leading-[22px]">Nº</span>
        <Field w="w-[285px]">8</Field>
        <span className="ml-[4px]">
          <SearchBtn />
        </span>
        <span className="mt-[2px] ml-[22px] flex h-[27px] w-[80px] items-center whitespace-nowrap">Data Interna</span>
        <span className="mt-[2px] ml-[5px]">
          <Field w="w-[77px]">20.09.2018</Field>
        </span>
        <span className="mt-[2px] ml-[3px]">
          <SearchBtn />
        </span>
      </div>
      <div className="flex h-[24px] items-center pb-[4px] pl-[113px] text-[18px] leading-none font-bold text-[#111]">Regularizada.</div>
      <div className="ml-[12px] flex gap-[12px]">
        <div className="w-[1030px]">
          <div className="flex h-[29px] items-end text-[13.5px] text-[#555]">
            <span className="flex h-[29px] w-[123px] items-center justify-center border-x-2 border-t-2 border-[#e6e6e6] bg-white pb-[4px] text-[#444]">Página Principal</span>
            <span className="ml-px flex h-[27px] w-[110px] items-center justify-center border-2 border-[#e4e4e4] bg-[#efefef]">Outros Dados</span>
            <span className="ml-[2px] flex h-[27px] w-[118px] items-center justify-center border-2 border-[#e4e4e4] bg-[#efefef]">Adiantamentos</span>
          </div>
          <div className="flex h-[536px] flex-col border-2 border-[#e6e6e6] bg-white pt-[9px] text-[13.5px] text-[#222]">
            <div className="flex items-center">
              <span className="w-[61px] text-right">Zona</span>
              <span className="ml-[5px]">
                <Combo w="w-[140px]">Centro</Combo>
              </span>
              <span className="ml-[20px] w-[73px]">Pagamento</span>
              <span className="ml-[4px]">
                <Combo w="w-[230px]" />
              </span>
              <span className="ml-auto">Data Original</span>
              <span className="mr-[41px] ml-[3px]">
                <Field w="w-[86px]">20.09.2018</Field>
              </span>
            </div>
            <div className="mt-[3px] flex items-center">
              <span className="w-[61px] text-right">Moeda</span>
              <span className="ml-[5px]">
                <Combo w="w-[140px]">EURO</Combo>
              </span>
              <span className="ml-auto">Vencimento</span>
              <span className="mr-[41px] ml-[4px]">
                <Field w="w-[86px]">20.10.2018</Field>
              </span>
            </div>
            <div className="mt-[8px] ml-[8px] flex items-start">
              <MainTable />
              <BoxBtn className="mt-[215px] ml-[4px]">
                <Calc />
              </BoxBtn>
            </div>
            <div className="mt-[11px] mr-[11px] ml-[10px] flex items-start justify-between">
              <BoxBtn w="w-[24px]" h="h-[25px]">
                <File size={15} className="text-[#888]" />
              </BoxBtn>
              <SearchBtn />
            </div>
            <div className="mt-[85px] mr-[20px] flex flex-col items-end gap-[3px]">
              <span className="mr-[20px] flex h-[26px] w-[32px] items-center justify-end border-2 border-[#e4e4e4] pr-[4px]">0</span>
              <span className="mr-[20px] flex h-[27px] w-[32px] items-center justify-end border-2 border-[#e4e4e4] pr-[4px]">5</span>
              <span className="flex items-end gap-[3px]">
                <span className="flex h-[27px] w-[32px] items-center justify-end border-2 border-[#e4e4e4] pr-[4px]">5</span>
                <span className="flex h-[19px] w-[17px] items-center justify-center border-2 border-[#d4d4d4] bg-[#f8f8f8] text-[13px]">a</span>
              </span>
            </div>
          </div>
        </div>
        <RightPanel />
      </div>
    </div>
  </div>
);

const dialogCols = "grid-cols-[93px_99px_100px_75px_92px_54px_165px_108px]";
const dialogHead = ["Data", "Vencimento", "Documento", "Nº Doc.", "Débito", "Crédito", "Nome", "Moeda Original"];
const dialogRows = [
  ["30.10.2018", "30.10.2018", "N/Cheque", "45877", "500,00", "", "Anabela da Fonseca", "EURO"],
  ["20.11.2018", "20.11.2018", "N/Cheque", "88554475", "600,00", "", "Anabela da Fonseca", "EURO"],
  ["22.11.2018", "22.11.2018", "N/Trf", "45558", "237,25", "", "Anabela da Fonseca", "EURO"],
  ["25.11.2018", "25.11.2018", "N/Trf", "45560", "300,00", "", "Anabela da Fonseca", "EURO"],
  ["30.11.2018", "30.11.2018", "N/Cheque", "88554548", "300,00", "", "Anabela da Fonseca", "EURO"],
  ["", "", "", "", "", "", "", ""],
  ["", "", "", "", "", "", "", ""],
];

const DialogGrid = () => (
  <div className="flex h-[239px] w-[824px] flex-col border-2 border-[#c4c4c4] bg-white text-[13.5px] text-[#222]">
    <div className="flex flex-1 overflow-hidden">
      <div className="w-[11px] shrink-0 border-r-2 border-black bg-[#efefef]">
        <div className="h-[29px] border-b-2 border-black" />
        {dialogRows.map((_, r) => (
          <div key={r} className="relative h-[26px] border-b-2 border-[#222]">
            {r === 0 && <span className="absolute top-[8px] left-[4px] h-0 w-0 border-y-[5px] border-l-[6px] border-y-transparent border-l-black" />}
          </div>
        ))}
      </div>
      <div className="w-[786px] shrink-0">
        <div className={`grid h-[31px] border-b-2 border-black pb-px text-[#333] ${dialogCols}`}>
          {dialogHead.map((h) => (
            <span key={h} className="flex items-center justify-center border-r-2 border-[#ececec] whitespace-nowrap">
              {h}
            </span>
          ))}
        </div>
        {dialogRows.map((row, r) => (
          <div key={r} className={`grid h-[26px] border-b-2 border-[#e4e4e4] leading-[16px] ${dialogCols} ${r === 0 ? "bg-[#ffff00]" : r > 4 ? "bg-[#fafafa]" : ""}`}>
            {row.map((c, i) =>
              r === 0 && i === 0 ? (
                <span key={i} className="border-2 border-[#1a8be0] px-px pt-px">
                  <span className="block h-[16px] bg-[#0a78d7] pl-[2px] text-[#e8f4ff] outline-1 outline-[#ffe080] outline-dotted">{c}</span>
                </span>
              ) : (
                <span key={i} className={i === 4 ? "border-r-2 border-[#e4e4e4] pr-[2px] text-right" : "border-r-2 border-[#e4e4e4] pl-[3px] whitespace-nowrap"}>
                  {c}
                </span>
              ),
            )}
          </div>
        ))}
      </div>
      <div className="flex flex-1 flex-col items-center justify-between bg-[#f0f0f0] pt-[5px] pb-px">
        <ChevronUp size={14} strokeWidth={3} className="text-[#555]" />
        <ChevronDown size={14} strokeWidth={3} className="text-[#555]" />
      </div>
    </div>
    <div className="flex h-[20px] shrink-0 items-center">
      <i className="ml-px h-[18px] w-[4px] bg-black" />
      <div className="ml-[2px] flex h-[20px] w-[790px] items-center bg-[#f0f0f0]">
        <ChevronLeft size={14} strokeWidth={3} className="ml-[3px] text-[#555]" />
        <i className="ml-[2px] h-[19px] w-[251px] bg-[#c8c8c8]" />
        <ChevronRight size={14} strokeWidth={3} className="ml-auto text-[#555]" />
      </div>
    </div>
  </div>
);

const Dialog = () => (
  <div className="absolute top-[553px] left-[483px] flex h-[465px] w-[939px] flex-col rounded-md border-[3px] border-[#ee0a32] bg-[#bcd3ec]">
    <div className="flex h-[34px] shrink-0 items-center justify-between rounded-t-sm bg-linear-to-b from-[#9db5d5] to-[#bcd4ec] pr-[10px] pl-[34px]">
      <span className="mt-[6px] text-[14.5px] text-[#333]">Conta Corrente</span>
      <span className="mt-[4px] flex gap-[4px]">
        <WinBtn kind="min" />
        <WinBtn kind="max" />
        <WinBtn kind="close" red />
      </span>
    </div>
    <div className="mx-[6px] flex h-[415px] flex-col">
      <div className="h-[81px] shrink-0 border-b-2 border-[#5ab8d0] bg-[#90d9e8]" />
      <div className="flex h-[334px] flex-col bg-[#efefef]">
        <div className="h-[47px] shrink-0 pt-[18px] pr-[51px] text-right text-[11px] leading-[14px] text-[#c4c4c4]">5 registos.</div>
        <div className="flex pl-[11px]">
          <div className="flex w-[28px] flex-col justify-end gap-[5px] pb-px">
            <BoxBtn w="w-[28px]" h="h-[28px]" className="text-[10px] leading-none font-bold text-[#444]">
              »«
            </BoxBtn>
            <BoxBtn w="w-[28px]" className="text-[10px] leading-none font-bold text-[#444]">
              «»
            </BoxBtn>
          </div>
          <div className="ml-[11px]">
            <DialogGrid />
          </div>
          <div className="ml-[9px] flex flex-col gap-[7px]">
            <BoxBtn>
              <ArrowBar up />
            </BoxBtn>
            <BoxBtn>
              <ArrowBar />
            </BoxBtn>
            <BoxBtn>
              <Svg s={21}>
                <path d="M2 4h8l2 3h10v14H2z" fill="#f4d060" />
                <path d="M15 3l5 6h-3v8h-4V9h-3z" fill="#333" />
              </Svg>
            </BoxBtn>
            <BoxBtn className="mt-[34px]">
              <span className="flex h-[18px] w-[18px] items-center justify-center rounded-full border-2 border-[#4ab4d8] text-[11px] font-bold text-[#4ab4d8]">?</span>
            </BoxBtn>
          </div>
        </div>
        <div className="mt-[10px] flex h-[28px] items-center pl-[49px] text-[13.5px] text-[#333]">
          <BoxBtn w="w-[115px]" h="h-[28px]" className="justify-start gap-[7px] pl-[2px]">
            <PrinterIcon />
            <span>
              <u>I</u>mprimir
            </span>
          </BoxBtn>
          <BoxBtn w="w-[28px]" h="h-[28px]" className="ml-[10px]">
            <Search size={17} strokeWidth={2.5} className="text-[#555]" />
          </BoxBtn>
          <BoxBtn w="w-[28px]" h="h-[28px]" className="ml-[47px]">
            <Svg s={20}>
              <path d="M3 2h7l2 2v10H3z" fill="#fff" stroke="#7a7ae0" strokeWidth="1.500" />
              <path d="M12 8h6l3 3v11h-9z" fill="#fff" stroke="#2a2a98" strokeWidth="1.800" />
              <path d="M7 15v6M5 19l2 3 2-3" fill="none" stroke="#2a2a98" strokeWidth="1.400" />
            </Svg>
          </BoxBtn>
          <BoxBtn w="w-[28px]" h="h-[28px]" className="ml-[10px]">
            <Svg s={20}>
              <rect x="4" y="2" width="16" height="20" fill="#eee" stroke="#666" strokeWidth="1.600" />
              <path d="M6 9h12M6 13h12M6 17h12M10 9v11M14 9v11" stroke="#666" />
            </Svg>
          </BoxBtn>
          <BoxBtn w="w-[28px]" h="h-[28px]" className="ml-[10px]">
            <Svg s={20}>
              <circle cx="11" cy="11" r="9" fill="#4ab4d8" />
              <circle cx="14" cy="14" r="5" fill="#eee" stroke="#444" strokeWidth="2" />
              <path d="M17 18l4 4" stroke="#444" strokeWidth="2" />
            </Svg>
          </BoxBtn>
          <span className="ml-[282px] flex h-[28px] w-[115px] items-center border-2 border-[#1a8be0] bg-[#ececec] pl-[5px]">
            <svg width="19" height="19" viewBox="0 0 24 24">
              <circle cx="12" cy="12" r="10" fill="none" stroke="#6f9a10" strokeWidth="3" />
              <path d="M7 12l4 4 7-8" fill="none" stroke="#6f9a10" strokeWidth="2.600" />
            </svg>
            <span className="ml-[22px]">
              <u>O</u>K
            </span>
          </span>
          <span className="ml-[11px] flex h-[28px] w-[113px] items-center border-2 border-[#c4c4c4] bg-[#efefef] pl-[6px]">
            <svg width="19" height="19" viewBox="0 0 24 24">
              <circle cx="12" cy="12" r="10" fill="none" stroke="#666" strokeWidth="3" />
              <path d="M6 18 18 6" stroke="#666" strokeWidth="3" />
            </svg>
            <span className="ml-[6px]">
              <u>C</u>ancelar
            </span>
          </span>
        </div>
      </div>
    </div>
    <i className="mt-[8px] h-[2px] bg-[#205a6a]" />
  </div>
);

export default function App() {
  return (
    <div className="relative flex h-[1080px] w-[1920px] flex-col overflow-hidden bg-[#f0f0f0] font-['Noto_Sans',sans-serif]">
      <div className="flex h-[28px] shrink-0 items-center justify-between border-t border-[#555] bg-linear-to-b from-[#8fa6c6] to-[#bad3ea] pr-[3px] pl-[33px]">
        <span className="text-[14.5px] text-[#222]">Mais Ritmo</span>
        <span className="mb-[3px] flex gap-[4px]">
          <WinBtn kind="min" />
          <WinBtn kind="restore" />
          <WinBtn kind="close" />
        </span>
      </div>
      <div className="h-[74px] shrink-0 border-b-2 border-[#4f98b0] bg-[#67b2cc]">
        <div className="flex h-[33px] items-center gap-[18px] pl-[14px] text-[14px] text-[#f0f8fb]">
          {menu.map((m) => (
            <span key={m.t}>
              {m.u ? (
                <>
                  <u>{m.t[0]}</u>
                  {m.t.slice(1)}
                </>
              ) : (
                m.t
              )}
            </span>
          ))}
        </div>
        <div className="flex gap-[4px] pl-[4px]">
          {toolbars.map((tb, g) => (
            <div key={g} className={`flex h-[31px] items-center rounded-[3px] border-b-2 border-[#9aa4ac] bg-[#f0f0f0] pl-[4px] ${tb.width}`}>
              <Grip />
              <span className="ml-[2px] flex">
                {tb.items.map((it, i) => (
                  <span key={i} className="flex w-[27.500px] items-center justify-center">
                    {it}
                  </span>
                ))}
              </span>
              {tb.tail && <span className="ml-[2px] text-[14px] text-[#222]">{tb.tail}</span>}
            </div>
          ))}
        </div>
      </div>
      <div className="flex-1" />
      <div className="flex h-[32px] shrink-0 items-center border-t-2 border-[#8ec4d8] border-b-2 border-b-[#333] bg-[#f0f0f0] pl-[8px] text-[14.5px] text-[#333]">
        <Grip />
        <ChevronUp size={20} className="ml-[6px] text-[#666]" />
        <span className="ml-[9px]">
          <Pencil />
        </span>
        <span className="ml-[4px]">
          <Doc band="#e02030" s={22} />
        </span>
        <span className="ml-[3px]">Compras</span>
      </div>
      <Sidebar />
      <ComprasWindow />
      <Dialog />
    </div>
  );
}
